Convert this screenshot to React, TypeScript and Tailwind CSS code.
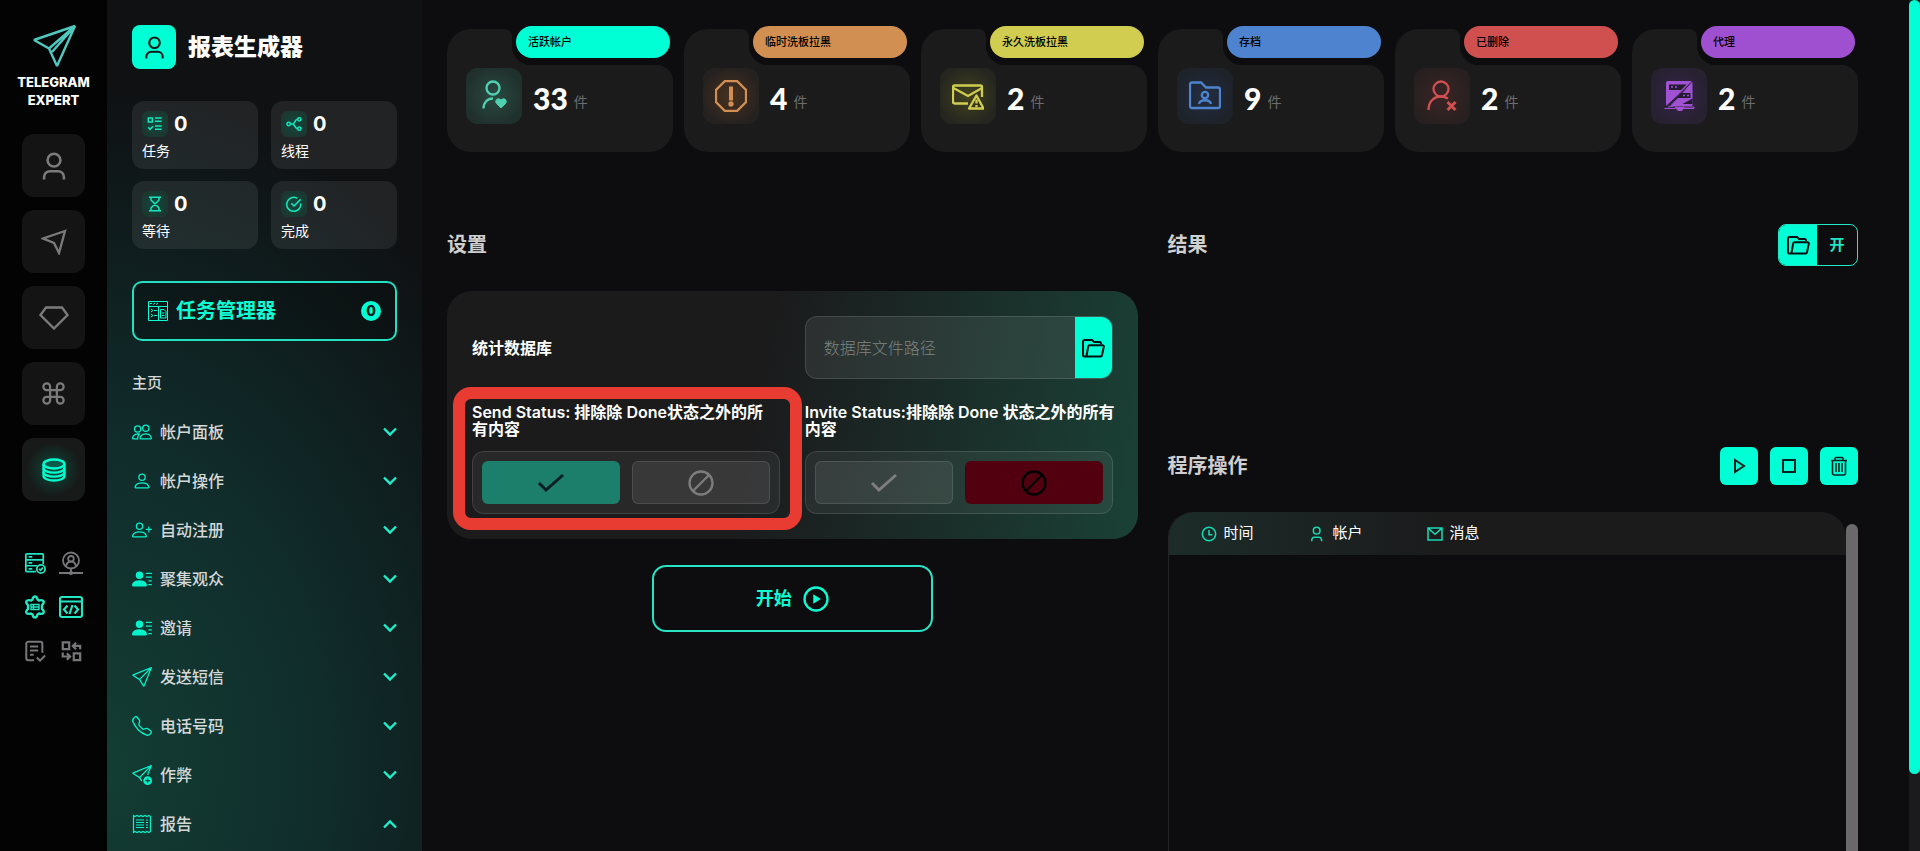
import type { ReactNode } from "react";
import {
  BsPeople,
  BsPerson,
  BsPersonLinesFill,
  BsPersonPlus,
  BsSend,
  BsSendPlus,
  BsTelephone,
} from "react-icons/bs";
import { LuCommand } from "react-icons/lu";

type SvgProps = { className?: string; children: ReactNode; box?: string; sw?: number };

function Svg({ className = "size-5", children, box = "0 0 24 24", sw = 2 }: SvgProps) {
  return (
    <svg
      viewBox={box}
      className={className}
      fill="none"
      stroke="currentColor"
      strokeWidth={sw}
      aria-hidden="true"
    >
      {children}
    </svg>
  );
}

function UserIcon({ className, sw = 2.2 }: { className?: string; sw?: number }) {
  return (
    <Svg className={className} sw={sw}>
      <circle cx="12" cy="7" r="5.500" />
      <path d="M3.500 23.500v-2a5 5 0 0 1 5-5h7a5 5 0 0 1 5 5v2" />
    </Svg>
  );
}

function FolderIcon() {
  return (
    <Svg className="size-6">
      <path
        strokeLinejoin="round"
        d="M20 8V7.500A1.500 1.500 0 0 0 18.500 6H13l-2-2H3.500A1.500 1.500 0 0 0 2 5.500V19a1.500 1.500 0 0 0 1.500 1.500h16a1.500 1.500 0 0 0 1.500-1.200l1.800-8.500a1.300 1.300 0 0 0-1.300-1.600H8.700a1.500 1.500 0 0 0-1.500 1.200L5.500 20"
      />
    </Svg>
  );
}

function ChevronIcon({ up = false }: { up?: boolean }) {
  return (
    <Svg className="h-[10px] w-[14px]" box="0 0 14 10" sw={2.4}>
      <path d={up ? "M1 8.500l6-6 6 6" : "M1 1.500l6 6 6-6"} />
    </Svg>
  );
}

function CheckIcon() {
  return (
    <Svg className="h-5 w-7" box="0 0 28 20" sw={3}>
      <path d="M2 10l7 7L26 2" />
    </Svg>
  );
}

function BanIcon() {
  return (
    <Svg className="size-[26px]" box="0 0 26 26" sw={2.3}>
      <circle cx="13" cy="13" r="11.500" />
      <path d="M5 21L21 5" />
    </Svg>
  );
}

const railItems = [
  { label: "帐户", icon: <UserIcon className="size-7" /> },
  {
    label: "发送",
    icon: (
      <Svg className="size-[26px]" box="0 0 26 26" sw={2.3}>
        <path d="M24 2L2 9.500l11 4.500 5 10z" strokeLinejoin="miter" />
      </Svg>
    ),
  },
  {
    label: "高级",
    icon: (
      <Svg className="h-6 w-[30px]" box="0 0 30 24" sw={2.3}>
        <path d="M7 1.500h16l5.500 7.500L15 22.500 1.500 9z" />
      </Svg>
    ),
  },
  { label: "命令", icon: <LuCommand className="size-[27px]" /> },
  {
    label: "数据",
    active: true,
    icon: (
      <Svg className="size-6" sw={2.3}>
        <ellipse cx="12" cy="6" rx="10.500" ry="4.500" fill="#0a5c4a" />
        <path d="M1.500 6v12c0 2.500 4.700 4.500 10.500 4.500s10.500-2 10.500-4.500V6" />
        <path d="M1.500 10.200c0 2.500 4.700 4.500 10.500 4.500s10.500-2 10.500-4.500M1.500 14.200c0 2.500 4.700 4.500 10.500 4.500s10.500-2 10.500-4.500" />
      </Svg>
    ),
  },
];

const railTools = [
  {
    label: "服务器",
    on: true,
    icon: (
      <Svg className="size-[22px]" sw={1.9}>
        <rect x="2" y="2" width="19" height="6.500" rx="1" />
        <path d="M2 8.500v12a1 1 0 0 0 1 1h10M21 8.500V13M2 15h12.500M5 5.300h4M5 11.800h4M5 18.300h4" />
        <circle cx="18.500" cy="18.500" r="4.500" />
        <path d="M16.500 18.500l1.500 1.500 2.500-3" />
      </Svg>
    ),
  },
  {
    label: "网络",
    icon: (
      <Svg className="size-6" sw={1.8}>
        <circle cx="12" cy="9.500" r="8" />
        <circle cx="12" cy="7.800" r="2.800" />
        <path d="M7 15.500c.5-3.500 2-5 5-5s4.500 1.500 5 5M12 17.500v4M0 22h24" />
        <circle cx="12" cy="22" r="1.200" />
      </Svg>
    ),
  },
  {
    label: "设置",
    on: true,
    icon: (
      <Svg className="size-6" sw={2.4}>
        <path
          strokeLinejoin="round"
          d="M9.500 4.500C10 2 10.500 1.500 12 1.500s2 .5 2.500 3l1.500 1c2.500-.8 3.700-.6 4.500.7s.3 2.300-1.500 4v3.600c1.800 1.700 2.300 2.700 1.500 4s-2 1.500-4.500.7l-1.500 1c-.5 2.500-1 3-2.500 3s-2-.5-2.500-3l-1.500-1c-2.500.8-3.700.6-4.500-.7s-.3-2.300 1.500-4v-3.600c-1.800-1.700-2.300-2.700-1.500-4s2-1.500 4.500-.7z"
        />
        <path d="M8 9.500h8v5H8zM8 12h8M10.500 9.500v5" strokeWidth="1.400" />
      </Svg>
    ),
  },
  {
    label: "代码",
    on: true,
    icon: (
      <Svg className="size-6" sw={2.2}>
        <rect x="1" y="2" width="22" height="20" rx="2" />
        <path d="M1 6.500h22M8.500 10.500l-3.500 4 3.500 4M15.500 10.500l3.500 4-3.500 4M13.500 10l-3 9" />
      </Svg>
    ),
  },
  {
    label: "日志",
    icon: (
      <Svg className="size-[22px]" sw={2.2}>
        <path d="M11 22H4.500a2 2 0 0 1-2-2V4a2 2 0 0 1 2-2H18a2 2 0 0 1 2 2v10M6.500 7h9M6.500 11.500h9M6.500 16h4M14 19l3.500 3.500L23 17" />
      </Svg>
    ),
  },
  {
    label: "转换",
    icon: (
      <Svg className="size-[22px]" sw={2.4}>
        <path d="M3 2.500h7V10H3zM15 14.500h7V22h-7zM22 10V6.500h-7M17.500 3L14 6.500l3.500 3.500M3 13.500v4.500h7M7.500 14.500L11 18l-3.500 3.500" />
      </Svg>
    ),
  },
];

const stats = [
  {
    label: "任务",
    icon: <path d="M2 3h6v6H2zM12 3h10M12 8h10M12 15h10M12 20h10M2 17l2.500 3L9 15.500" />,
  },
  {
    label: "线程",
    icon: (
      <>
        <circle cx="4" cy="12" r="2.500" />
        <circle cx="20" cy="5" r="2.500" />
        <circle cx="20" cy="19" r="2.500" />
        <path d="M6.500 12H10c3 0 3-7 7.500-7M10 12c3 0 3 7 7.500 7" />
      </>
    ),
  },
  {
    label: "等待",
    icon: <path d="M3 2h18M3 22h18M6 2v4l12 12v4M18 2v4L6 18v4" />,
  },
  {
    label: "完成",
    icon: <path d="M22 11a10.500 10.500 0 1 1-5-7.500M8 11l4 4L22 5" />,
  },
];

const menu = [
  { label: "帐户面板", icon: <BsPeople /> },
  { label: "帐户操作", icon: <BsPerson /> },
  { label: "自动注册", icon: <BsPersonPlus /> },
  { label: "聚集观众", icon: <BsPersonLinesFill /> },
  { label: "邀请", icon: <BsPersonLinesFill /> },
  { label: "发送短信", icon: <BsSend /> },
  { label: "电话号码", icon: <BsTelephone /> },
  { label: "作弊", icon: <BsSendPlus /> },
  {
    label: "报告",
    open: true,
    icon: (
      <Svg className="size-5" box="0 0 20 20" sw={1.2}>
        <path d="M1.500 1.500l1.500 1 2-1 2 1 2-1 2 1 2-1 2 1 2-1 1.500 1v15l-1.500 1-2-1-2 1-2-1-2 1-2-1-2 1-2-1-1.500 1z" />
        <path d="M4 6h8M4 8.500h8M4 11h8M4 13.500h8M14 6h2M14 8.500h2M14 11h2M14 13.500h2" />
      </Svg>
    ),
  },
];

const cards = [
  {
    label: "活跃帐户",
    count: 33,
    pill: "bg-[#00ffd5]",
    tile: "text-[#4fd0b0] bg-[radial-gradient(circle,#2b4a42,#20302c_75%)]",
    icon: (
      <>
        <circle cx="15" cy="8" r="6.500" />
        <path d="M5.500 28.500c0-6 4-10 9.500-10" />
        <path
          d="M23 28l-4.500-4.500c-2.500-3 1.500-6.500 4.500-3.500 3-3 7 .5 4.500 3.500z"
          fill="currentColor"
          strokeWidth="1"
        />
      </>
    ),
  },
  {
    label: "临时洗板拉黑",
    count: 4,
    pill: "bg-[#d19052]",
    tile: "text-[#d19052] bg-[radial-gradient(circle,#48321f,#252120_75%)]",
    icon: (
      <>
        <path d="M10 1h12l9 9v12l-9 9H10l-9-9V10z" />
        <path d="M16 6.500v14" strokeWidth="4" />
        <circle cx="16" cy="24" r="1.500" fill="currentColor" />
      </>
    ),
  },
  {
    label: "永久洗板拉黑",
    count: 2,
    pill: "bg-[#d0cd50]",
    tile: "text-[#d0cd50] bg-[radial-gradient(circle,#42421f,#25261f_75%)]",
    icon: (
      <>
        <path d="M16 23.500H2.500a1.500 1.500 0 0 1-1.500-1.500V7a1.500 1.500 0 0 1 1.500-1.500h26A1.500 1.500 0 0 1 30 7v10M1.500 8L16 16l14-8" />
        <path d="M24.500 15.500L31.500 28.500H17z" strokeLinejoin="round" />
        <path d="M24.500 19.500v4M24.500 25v2" />
      </>
    ),
  },
  {
    label: "存档",
    count: 9,
    pill: "bg-[#4e83cf]",
    tile: "text-[#4e83cf] bg-[radial-gradient(circle,#222e42,#1e2229_75%)]",
    icon: (
      <>
        <path d="M1 26V4.500a2 2 0 0 1 2-2h9l5 5h12a2 2 0 0 1 2 2V26a2 2 0 0 1-2 2H3a2 2 0 0 1-2-2z" />
        <circle cx="16" cy="15" r="3.200" />
        <path d="M10 24c1-5 11-5 12 0" />
      </>
    ),
  },
  {
    label: "已删除",
    count: 2,
    pill: "bg-[#d05050]",
    tile: "text-[#d05050] bg-[radial-gradient(circle,#3b2425,#282020_75%)]",
    icon: (
      <>
        <circle cx="15" cy="9" r="7.500" />
        <path d="M2.500 30c0-8 5-13.500 12.500-13.500 3 0 5 .7 7 2.200" />
        <path d="M21.500 22l8 8M29.500 22l-8 8" strokeWidth="3" />
      </>
    ),
  },
  {
    label: "代理",
    count: 2,
    pill: "bg-[#9f50d0]",
    tile: "text-[#a152d2] bg-[radial-gradient(circle,#34234a,#272130_75%)]",
    icon: (
      <>
        <path d="M3.500 2.500a1 1 0 0 1 1-1H28l-12 12L3.500 25z" fill="currentColor" strokeWidth="1" />
        <path d="M29 2.500v23H8l6-6z" fill="currentColor" strokeWidth="1" />
        <path d="M6 4.500h17.500L18 10H6zM19 13h8.500v5H13z" fill="#251b30" stroke="none" />
        <path d="M8 7h2M12 7h2M20 15.500h2M24 15.500h2" strokeWidth="1.400" />
        <path d="M29.500 18.500l-10 5.500h10z" fill="#251b30" stroke="none" />
        <path d="M1.500 28.500h11M20 27h11v1.500H20M5 27l12-2" strokeWidth="1" />
        <path d="M12 27h9l-2 3.500h-4z" fill="currentColor" strokeWidth="1" />
      </>
    ),
  },
];

const columns = [
  {
    label: "时间",
    width: "w-[141px] pl-[32px]",
    icon: (
      <>
        <circle cx="12" cy="12" r="10" />
        <path d="M12 6v7h5" />
      </>
    ),
  },
  {
    label: "帐户",
    width: "w-[117px]",
    icon: (
      <>
        <circle cx="10" cy="7" r="5" />
        <path d="M2.500 23c0-4 1.500-6 4-6h7c2.500 0 4 2 4 6" />
      </>
    ),
  },
  { label: "消息", width: "", icon: <path d="M1.500 3h21v18h-21zM2 3.500l10 9 10-9" /> },
];

function Rail() {
  return (
    <aside className="w-[107px] shrink-0 bg-[#030303] pt-6">
      <Svg className="mx-auto h-[44px] w-[46px] text-[#4fc8c0]" box="0 0 46 44" sw={2.4}>
        <path d="M44 2L3 16l15 8.500L26 42z M44 2L18 24.500 M44 2L21 28" strokeLinejoin="bevel" />
      </Svg>
      <p className="mt-[5px] text-center text-[13px] leading-[18px] font-extrabold text-white">
        TELEGRAM
        <br />
        EXPERT
      </p>
      <nav className="mt-[25px] flex flex-col items-center gap-[13px]">
        {railItems.map((item) => (
          <button
            key={item.label}
            aria-label={item.label}
            className={
              item.active
                ? "grid size-[63px] place-items-center rounded-xl bg-[radial-gradient(circle,#0d4a3c,#171a19_60%)] text-[#00ffd0]"
                : "grid size-[63px] place-items-center rounded-xl bg-[#141414] text-[#7b7b7b]"
            }
          >
            {item.icon}
          </button>
        ))}
      </nav>
      <div className="mt-[50px] grid grid-cols-[24px_24px] justify-center gap-x-3 gap-y-5 pr-[2px]">
        {railTools.map((tool) => (
          <button
            key={tool.label}
            aria-label={tool.label}
            className={
              tool.on
                ? "grid size-6 place-items-center text-[#22e6c4]"
                : "grid size-6 place-items-center text-[#77777a]"
            }
          >
            {tool.icon}
          </button>
        ))}
      </div>
    </aside>
  );
}

function Sidebar() {
  return (
    <aside className="w-[315px] shrink-0 bg-[radial-gradient(150%_80%_at_0%_90%,#133d33_0%,#102d2c_45%,#0f1113_100%)] px-[25px] pt-[25px]">
      <div className="flex items-center gap-3">
        <span className="grid size-11 place-items-center rounded-lg bg-[#00ffd5] text-[#0a1a17]">
          <UserIcon className="size-[23px]" />
        </span>
        <h1 className="text-[23px] font-extrabold text-white">报表生成器</h1>
      </div>

      <div className="mt-8 grid grid-cols-2 gap-x-[13px] gap-y-3">
        {stats.map((stat) => (
          <div key={stat.label} className="h-[68px] rounded-xl bg-white/8 px-[10px] pt-[10px]">
            <div className="flex items-center gap-[6px]">
              <span className="grid size-[26px] place-items-center rounded-md bg-[radial-gradient(circle,#14483d,#1b3730_75%)] text-[#14e8bd]">
                <Svg className="size-4" sw={2.3}>
                  {stat.icon}
                </Svg>
              </span>
              <span className="text-xl leading-[26px] font-bold text-white">0</span>
            </div>
            <p className="mt-1 text-sm leading-5 text-white">{stat.label}</p>
          </div>
        ))}
      </div>

      <button className="mt-8 flex h-[60px] w-full items-center rounded-[10px] border-2 border-[#22e0c0] bg-black/20 px-[14px] text-[#0ffbd3]">
        <Svg className="size-5" box="0 0 20 20" sw={1}>
          <path d="M.5.500h19v19H.5zM.5 5.500h19M10.500 5.500v14M2 2.500h2M5 3.500L7 2M8 3.500L10 2M3 8l2 1.500L3 11M6 9.500h3M3 13l2 1.500L3 16M6 14.500h3M12.500 8.500h3.500l2 2v6.500h-5.500zM14 12h2.500M14 14.500h2.500" />
        </Svg>
        <span className="ml-2 text-xl font-bold">任务管理器</span>
        <span className="ml-auto grid size-5 place-items-center rounded-full bg-[#00ffd5] text-sm leading-5 font-extrabold text-[#0a1a17]">
          0
        </span>
      </button>

      <nav className="mt-[18px]">
        <a href="#" className="flex h-12 items-center text-[15px] font-medium text-[#d4d8d7]">
          主页
        </a>
        {menu.map((item) => (
          <button
            key={item.label}
            className="flex h-[49px] w-full items-center text-base font-medium text-[#d4d8d7]"
          >
            <span className="text-xl text-[#06f2cb]">{item.icon}</span>
            <span className="ml-2">{item.label}</span>
            <span className="ml-auto text-[#1ff0cb]">
              <ChevronIcon up={item.open} />
            </span>
          </button>
        ))}
      </nav>
    </aside>
  );
}

function CountCard({ card }: { card: (typeof cards)[number] }) {
  return (
    <div className="relative">
      <div className="flex h-9 items-end">
        <div className="h-9 w-[65px] rounded-tl-3xl rounded-tr-lg bg-[#1b1b1c]" />
        {/* concave corner under the label */}
        <div className="size-5 bg-[radial-gradient(circle_at_100%_0,transparent_20px,#1b1b1c_21px)]" />
      </div>
      <div className="flex h-[87px] rounded-tr-2xl rounded-b-3xl bg-[#1b1b1c] pt-[3px] pl-[19px]">
        <span className={`grid size-[56px] place-items-center rounded-xl ${card.tile}`}>
          <Svg className="size-8" box="0 0 32 32" sw={2.3}>
            {card.icon}
          </Svg>
        </span>
        <p className="ml-[11px] flex h-[60px] items-center gap-[6px]">
          <span className="font-[Lato] text-[30px] font-black text-white">{card.count}</span>
          <span className="pt-2 text-sm text-[#6d6d6e]">件</span>
        </p>
      </div>
      <span
        className={`absolute -top-[3px] right-[3px] left-[69px] flex h-8 items-center rounded-full pl-3 text-[11px] font-medium text-black ${card.pill}`}
      >
        {card.label}
      </span>
    </div>
  );
}

function Toggle({ on, label }: { on: boolean; label: string }) {
  const idle = "border border-white/10 bg-white/8 text-[#7d7d7e]";
  return (
    <div
      role="group"
      aria-label={label}
      className="mt-[13px] grid h-[63px] grid-cols-2 gap-3 rounded-xl border border-white/12 bg-white/6 p-[9px]"
    >
      <button
        aria-label="是"
        aria-pressed={on}
        className={`grid place-items-center rounded-md ${on ? "bg-[#1c7f6c] text-[#0b1f22]" : idle}`}
      >
        <CheckIcon />
      </button>
      <button
        aria-label="否"
        aria-pressed={!on}
        className={`grid place-items-center rounded-md ${on ? idle : "bg-[#52000f] text-black"}`}
      >
        <BanIcon />
      </button>
    </div>
  );
}

function Settings() {
  return (
    <section>
      <h2 className="flex h-[42px] items-center text-xl font-bold text-[#cfcfcf]">设置</h2>
      <div className="mt-[25px] grid grid-cols-2 gap-[25px] rounded-[25px] bg-[linear-gradient(100deg,#1b1b1c_45%,#1a4136)] p-[25px]">
        <label htmlFor="db-path" className="self-center text-base font-bold text-white">
          统计数据库
        </label>
        <div className="flex h-[63px] overflow-hidden rounded-xl border border-white/12 bg-white/8">
          <input
            id="db-path"
            placeholder="数据库文件路径"
            className="min-w-0 flex-1 px-[18px] text-base font-light text-white outline-none placeholder:text-[#7d8382]"
          />
          <button
            aria-label="选择文件"
            className="grid w-[37px] place-items-center bg-[#00ffd5] text-[#06110f]"
          >
            <FolderIcon />
          </button>
        </div>
        <div className="relative">
          <p className="text-base leading-[17px] font-semibold text-white">
            Send Status: 排除除 Done状态之外的所
            <br />
            有内容
          </p>
          <Toggle on label="Send Status" />
          <div className="pointer-events-none absolute -top-[17px] -right-[22px] -bottom-4 -left-[19px] rounded-[18px] border-12 border-[#e83c33]" />
        </div>
        <div>
          <p className="text-base leading-[17px] font-semibold whitespace-nowrap text-white">
            Invite Status:排除除 Done 状态之外的所有
            <br />
            内容
          </p>
          <Toggle on={false} label="Invite Status" />
        </div>
      </div>
      <button className="mx-auto mt-[26px] flex h-[67px] w-[281px] items-center justify-center gap-[11px] rounded-[14px] border-2 border-[#28e3c4] text-lg font-bold text-[#0ffbd3]">
        开始
        <Svg className="size-[26px]" box="0 0 26 26" sw={2.3}>
          <circle cx="13" cy="13" r="11.500" />
          <path d="M11 9.500v7l5.500-3.500z" fill="currentColor" strokeWidth="1.500" />
        </Svg>
      </button>
    </section>
  );
}

function Results() {
  const action = "grid size-[38px] place-items-center rounded-md bg-[#00ffd5] text-[#06241f]";
  return (
    <section className="flex flex-col">
      <div className="flex h-[42px] items-center justify-between">
        <h2 className="text-xl font-bold text-[#cfcfcf]">结果</h2>
        <button className="flex h-[42px] w-20 overflow-hidden rounded-lg border border-[#1ee8c6]">
          <span className="grid h-full w-[38px] place-items-center bg-[#00ffd5] text-[#06110f]">
            <FolderIcon />
          </span>
          <span className="grid h-full flex-1 place-items-center text-[15px] font-bold text-[#20e5c4]">
            开
          </span>
        </button>
      </div>

      <div className="mt-[181px] flex items-center gap-3">
        <h2 className="mr-auto text-xl font-bold text-[#cfcfcf]">程序操作</h2>
        <button aria-label="运行" className={action}>
          <Svg className="size-4" box="0 0 16 16">
            <path d="M4 2v12l9-6z" />
          </Svg>
        </button>
        <button aria-label="停止" className={action}>
          <Svg className="size-4" box="0 0 16 16">
            <path d="M2 2h12v12H2z" />
          </Svg>
        </button>
        <button aria-label="清除" className={action}>
          <Svg className="size-5" box="0 0 20 20" sw={1.6}>
            <path d="M2 4.500h16M6 4V2.500a1 1 0 0 1 1-1h6a1 1 0 0 1 1 1V4M3.500 5v12a2 2 0 0 0 2 2h9a2 2 0 0 0 2-2V5M7 7v9M10 7v9M13 7v9" />
          </Svg>
        </button>
      </div>

      <div className="mt-[27px] flex flex-1 rounded-t-[25px] border-l border-[#242427]">
        <div className="flex-1">
          <table className="w-full table-fixed overflow-hidden rounded-t-[25px] bg-[linear-gradient(90deg,#1c2c29,#1b1b1c_40%)] text-[15px] text-white">
            <thead>
              <tr className="h-[43px]">
                {columns.map((col) => (
                  <th key={col.label} className={`text-left font-normal ${col.width}`}>
                    <span className="flex items-center gap-[7px]">
                      <Svg className="size-4 text-[#16d9b4]" sw={2.3}>
                        {col.icon}
                      </Svg>
                      {col.label}
                    </span>
                  </th>
                ))}
              </tr>
            </thead>
          </table>
        </div>
        <div className="mt-3 w-3 rounded-t-full bg-[#6a686b]" />
      </div>
    </section>
  );
}

export default function App() {
  return (
    <div className="flex h-screen overflow-hidden bg-[#0d0d0f] font-[Inter,'Noto_Sans_CJK_SC',sans-serif]">
      <Rail />
      <Sidebar />
      <main className="flex min-w-0 flex-1 flex-col pt-[29px] pr-[51px] pl-[25px]">
        <div className="grid grid-cols-6 gap-[11px]">
          {cards.map((card) => (
            <CountCard key={card.label} card={card} />
          ))}
        </div>
        <div className="mt-[72px] grid flex-1 grid-cols-2 gap-[30px]">
          <Settings />
          <Results />
        </div>
      </main>
      <div className="h-full w-[11px] shrink-0 bg-[#1b1b1d]">
        <div className="h-[91%] rounded-full bg-[#00ffd5]" />
      </div>
    </div>
  );
}
